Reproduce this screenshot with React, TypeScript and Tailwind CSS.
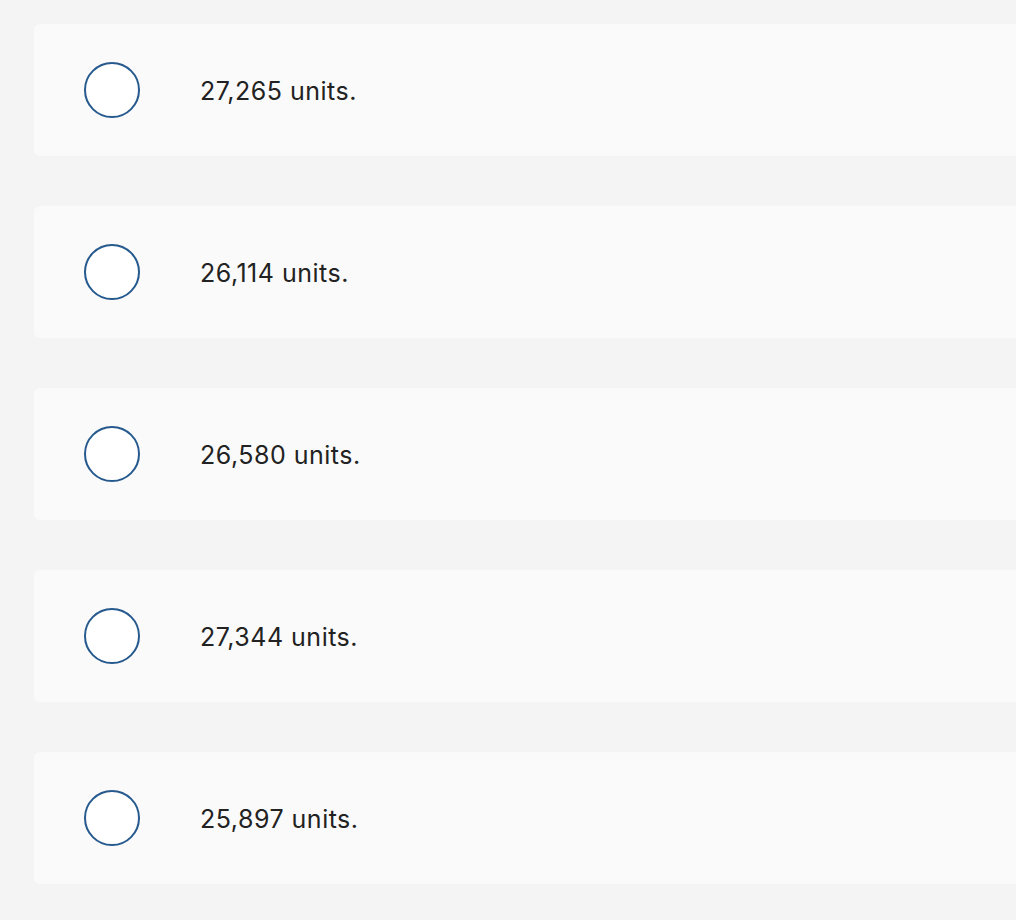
import React from 'react';

const options = ['27,265 units.', '26,114 units.', '26,580 units.', '27,344 units.', '25,897 units.'];

export default function App() {
  return (
    <div className="min-h-[920px] w-[1016px] overflow-hidden bg-[#f4f4f4] pt-6 pl-[34px] font-['Inter',sans-serif]">
      <div className="flex flex-col gap-[50px]">
        {options.map((label) => (
          <div key={label} className="flex h-[132px] w-[1000px] items-center rounded-l-md bg-[#fafafa]">
            <div className="ml-[50px] h-[56px] w-[56px] shrink-0 rounded-full border-2 border-[#265a8e] bg-white" />
            <span className="ml-[60px] mt-[3px] text-[25px] tracking-[0.5px] text-[#222]">{label}</span>
          </div>
        ))}
      </div>
    </div>
  );
}
